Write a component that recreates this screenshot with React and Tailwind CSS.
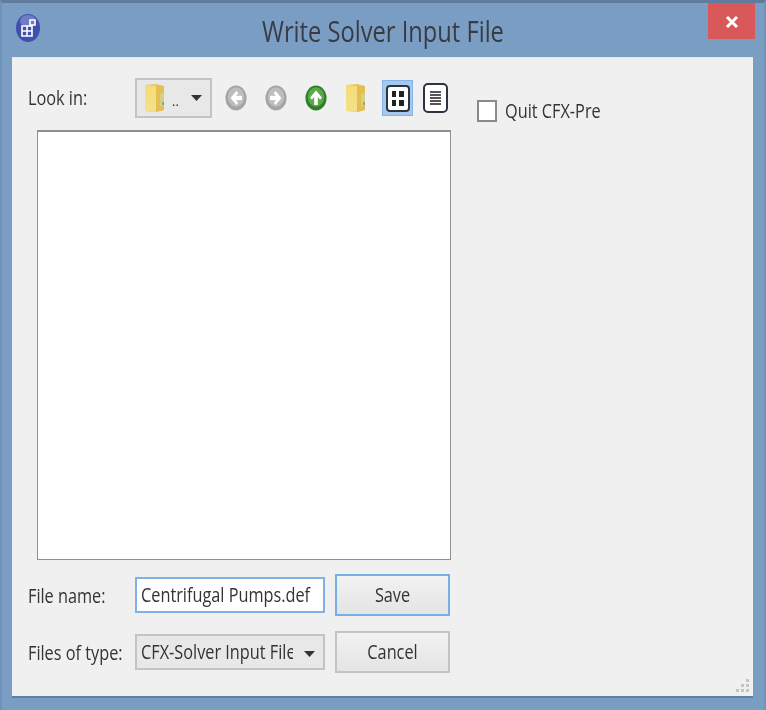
import React from 'react';

// ---- Toolbar icons ----
function FolderIcon({ id }) {
  return (
    <svg width="22" height="30" viewBox="0 0 22 30">
      <defs>
        <linearGradient id={id} x1="0" y1="0" x2="0" y2="1">
          <stop offset="0" stopColor="#f7dc78" />
          <stop offset="1" stopColor="#f2e08a" />
        </linearGradient>
      </defs>
      <path d="M1 2 L12 1 L20 3 L20 27 L12 29 L1 28 Z" fill="#e6c458" />
      <path d="M1 2 L12 3 L12 29 L1 28 Z" fill={`url(#${id})`} />
      <path d="M12 3 L20 3 L20 27 L12 29 Z" fill="#e3be50" />
      <path d="M16 11 L20 9 L20 22 L16 24 Z" fill="#d8cf86" />
      <rect x="18" y="19" width="2" height="3" fill="#98a868" />
    </svg>
  );
}

function CircleArrow({ dir, dark, light }) {
  const paths = {
    left: 'M12.5 5.5 L6 12 L12.5 18.5 L14.5 16.5 L12 14 L18.5 14 L18.5 10 L12 10 L14.5 7.5 Z',
    right: 'M11.5 5.5 L18 12 L11.5 18.5 L9.5 16.5 L12 14 L5.5 14 L5.5 10 L12 10 L9.5 7.5 Z',
    up: 'M12 5 L18.5 11.5 L16.5 13.5 L14 11 L14 18.5 L10 18.5 L10 11 L7.5 13.5 L5.5 11.5 Z',
  };
  return (
    <svg width="22" height="26" viewBox="0 0 24 24" preserveAspectRatio="none">
      <circle cx="12" cy="12" r="11.5" fill={dark} />
      <circle cx="12" cy="11" r="9" fill={light} />
      <path d={paths[dir]} fill="#fff" />
    </svg>
  );
}

function IconCell({ children }) {
  return <div className="w-[40px] h-[40px] flex items-center justify-center">{children}</div>;
}

function AppIcon() {
  return (
    <svg width="26" height="32" viewBox="0 0 26 32">
      <ellipse cx="13" cy="16" rx="12" ry="14" fill="#3f51ad" />
      <ellipse cx="13" cy="9" rx="8" ry="6" fill="#8f9bd6" opacity="0.6" />
      <path d="M7 14 h5 v5 h-5 z M7 19 h5 v5 h-5 z M12 19 h5 v5 h-5 z M12 14 h5 v5 h-5 z M15 8 h5 v5 h-5 z" fill="none" stroke="#fff" strokeWidth="1.6" />
    </svg>
  );
}

function Arrow() {
  return (
    <svg width="11" height="6" viewBox="0 0 11 6">
      <path d="M0 0 H11 L5.5 6 Z" fill="#333" />
    </svg>
  );
}

function Label({ children, className = '' }) {
  return (
    <span className={`inline-block origin-center scale-y-[1.25] text-[16.3px] leading-none text-[#333] whitespace-nowrap ${className}`}>
      {children}
    </span>
  );
}

export default function App() {
  return (
    <div className="w-[766px] h-[710px] flex flex-col bg-[#7a9dc4] border-t-[3px] border-x-2 border-t-[#5f7c9c] border-x-[#6f93bb] font-['Open_Sans',sans-serif] overflow-hidden blur-[0.5px]">
      {/* Title bar */}
      <div className="h-[54px] shrink-0 grid grid-cols-[1fr_auto_1fr] items-start">
        <div className="pl-[13px] pt-[9px]">
          <AppIcon />
        </div>
        <div className="pt-[14px]">
          <span className="inline-block scale-y-[1.2] text-[23.7px] leading-[28px] text-[#383c42]">Write Solver Input File</span>
        </div>
        <div className="flex justify-end pr-[9px]">
          <div className="w-[47px] h-[36px] bg-[#d9595a] flex items-center justify-center pt-[1px]">
            <svg width="14" height="14" viewBox="0 0 14 14">
              <path d="M2 2 L12 12 M12 2 L2 12" stroke="#fff" strokeWidth="3" />
            </svg>
          </div>
        </div>
      </div>

      {/* Dialog body */}
      <div className="mx-[10px] w-[741px] h-[639px] bg-[#f0f0f0] border-t border-[#dfe8f2] shadow-[0_2px_0_#5f80a3] flex">
        <div className="w-[440px] pt-[20px]">
          {/* Look in row */}
          <div className="flex items-center pl-[16px] h-[40px]">
            <div className="w-[107px]">
              <Label>Look in:</Label>
            </div>
            <div className="w-[77px] h-[40px] border-2 border-[#c4c4c4] bg-[#e8e8e8] flex items-center pl-[7px]">
              <FolderIcon id="folderA" />
              <span className="text-[13px] leading-none text-[#333] ml-[6px] mr-[12px] pt-[6px]">..</span>
              <Arrow />
            </div>
            <div className="ml-[4px] flex items-center">
              <IconCell><CircleArrow dir="left" dark="#a4a4a4" light="#bdbdbd" /></IconCell>
              <IconCell><CircleArrow dir="right" dark="#a4a4a4" light="#bdbdbd" /></IconCell>
              <IconCell><CircleArrow dir="up" dark="#2f7f2a" light="#5aa84a" /></IconCell>
              <IconCell><FolderIcon id="folderB" /></IconCell>
              <div className="ml-[6px] w-[31px] h-[36px] bg-[#a4c8ee] border border-[#85b3e4] flex items-center justify-center">
                <div className="w-[24px] h-[27px] bg-white border-2 border-[#2c3440] rounded-[4px] grid grid-cols-2 gap-[3px] p-[4px]">
                  <span className="bg-[#222]" />
                  <span className="bg-[#222]" />
                  <span className="bg-[#222]" />
                  <span className="bg-[#222]" />
                </div>
              </div>
              <div className="ml-[10px] w-[25px] h-[30px] bg-white border-2 border-[#2c3440] rounded-[5px] flex flex-col justify-center gap-[1px] px-[5px]">
                <span className="h-[2px] bg-[#555]" />
                <span className="h-[2px] bg-[#555]" />
                <span className="h-[2px] bg-[#555]" />
                <span className="h-[2px] bg-[#555]" />
                <span className="h-[2px] bg-[#555]" />
              </div>
            </div>
          </div>

          {/* File list */}
          <div className="ml-[25px] mt-[12px] w-[414px] h-[430px] bg-white border border-[#8f8f8f] border-t-2" />

          {/* File name row */}
          <div className="mt-[14px] pl-[16px] h-[42px] flex items-center">
            <div className="w-[107px] pt-[1px]">
              <Label>File name:</Label>
            </div>
            <div className="w-[190px] h-[36px] bg-white border-2 border-[#7fb0e6] flex items-center pl-[4px] pt-[1px] overflow-hidden">
              <Label>Centrifugal Pumps.def</Label>
            </div>
            <button className="ml-[10px] w-[115px] h-[42px] border-2 border-[#78aee6] bg-gradient-to-b from-[#f2f2f2] to-[#e4e4e4] flex items-center justify-center pt-[1px]">
              <Label>Save</Label>
            </button>
          </div>

          {/* Files of type row */}
          <div className="mt-[15px] pl-[16px] h-[42px] flex items-center">
            <div className="w-[107px] pt-[1px]">
              <Label>Files of type:</Label>
            </div>
            <div className="w-[190px] h-[36px] border-2 border-[#c4c4c4] bg-[#e8e8e8] flex items-center pl-[4px] overflow-hidden">
              <span className="w-[152px] h-[30px] pt-[1px] flex items-center overflow-hidden shrink-0">
                <Label>CFX-Solver Input File</Label>
              </span>
              <span className="ml-[11px] pt-[3px] flex"><Arrow /></span>
            </div>
            <button className="ml-[10px] w-[115px] h-[42px] border-2 border-[#c4c4c4] bg-gradient-to-b from-[#f2f2f2] to-[#e4e4e4] flex items-center justify-center pt-[1px]">
              <Label>Cancel</Label>
            </button>
          </div>
        </div>

        {/* Quit checkbox */}
        <div className="flex-1 pl-[25px] pt-[41px]">
          <div className="flex items-center h-[24px]">
            <div className="w-[20px] h-[22px] bg-white border-2 border-[#8a8a8a]" />
            <Label className="ml-[8px]">Quit CFX-Pre</Label>
          </div>
        </div>

        {/* Resize grip sits in the corner */}
        <div className="self-end pr-[4px] pb-[4px] -ml-[20px] grid grid-cols-3 gap-[2px] w-[17px]">
          <span /><span /><span className="h-[3px] bg-[#c4c4c4]" />
          <span /><span className="h-[3px] bg-[#c4c4c4]" /><span className="h-[3px] bg-[#c4c4c4]" />
          <span className="h-[3px] bg-[#c4c4c4]" /><span className="h-[3px] bg-[#c4c4c4]" /><span className="h-[3px] bg-[#c4c4c4]" />
        </div>
      </div>
    </div>
  );
}
